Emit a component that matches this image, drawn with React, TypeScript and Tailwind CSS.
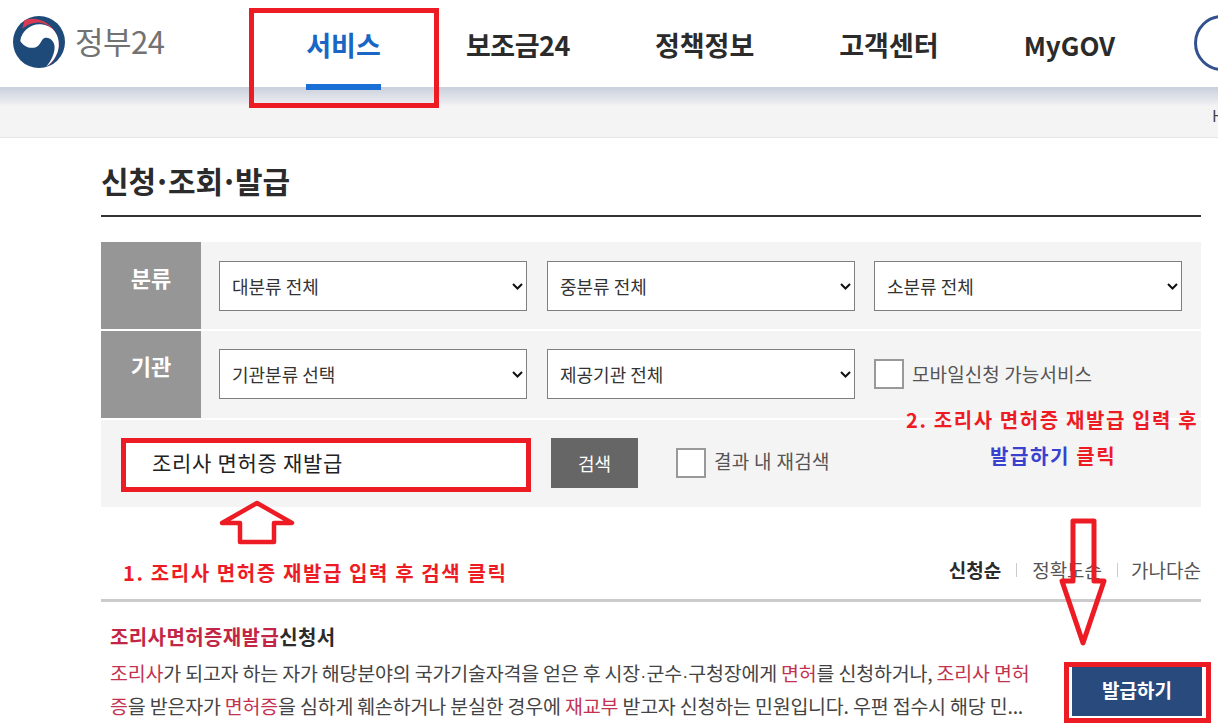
import React from "react";

const kr = "font-['Noto_Sans_CJK_KR','Noto_Sans',sans-serif]";

function Logo() {
  return (
    <svg width="52" height="52" viewBox="0 0 50 50" className="shrink-0">
      <circle cx="25" cy="25" r="25" fill="#1d4a78" />
      <path d="M11 4 A25 25 0 0 1 32 49 C44 40 46 22 36 11 C28 4 18 5 9 12 Z" fill="#db3a55" />
      <path d="M7 24 C8 14 18 7 27 8 C38 9 45 18 44 29 C43.5 37 38 45 32 48.5 C37 43 40 36 40 30 C40 24 35 20 31 21 C27 22 27 28 22 30 C16 32 10 29 7 24Z" fill="#fff" />
    </svg>
  );
}

function Hl({ children }: { children: React.ReactNode }) {
  return <span className="text-[#c2334f]">{children}</span>;
}

function Dot() {
  return <span className="text-[11px] font-bold">·</span>;
}

function Select({ label, className = "" }: { label: string; className?: string }) {
  return (
    <div className={`relative w-[308px] h-[50px] ${className}`}>
      <select className="w-full h-full appearance-none bg-white border border-[#7f7f7f] text-[18px] text-[#333] pl-[12px] rounded-none">
        <option>{label}</option>
      </select>
      <svg className="absolute right-[4px] top-[22px] pointer-events-none" width="11" height="7" viewBox="0 0 11 7" fill="none">
        <path d="M1 1 L5.5 5.5 L10 1" stroke="#111" strokeWidth="2" />
      </svg>
    </div>
  );
}

export default function App() {
  return (
    <div className={`relative w-[1218px] h-[724px] overflow-hidden bg-white ${kr}`}>
      <header className="h-[87px] flex items-start bg-white">
        <div className="flex items-center pl-[13px] pt-[16px] w-[306px]">
          <Logo />
          <span className="ml-[10px] -mt-[4px] text-[31px] leading-none text-[#727272] tracking-[-0.5px]">정부24</span>
        </div>
        <nav className="flex items-start text-[27px] font-bold text-[#2b2b2b] leading-none">
          <div className="relative w-[75px] h-[90px] pt-[31px] border-b-[6px] border-[#1a6fd6] text-[#1a66c4] text-center whitespace-nowrap">서비스</div>
          <div className="ml-[85px] pt-[31px] tracking-[-0.5px] whitespace-nowrap">보조금24</div>
          <div className="ml-[85px] pt-[31px] whitespace-nowrap">정책정보</div>
          <div className="ml-[85px] pt-[31px] whitespace-nowrap">고객센터</div>
          <div className="ml-[85px] pt-[32px] text-[26px] whitespace-nowrap">MyGOV</div>
        </nav>
      </header>
      <div className="h-[51px] bg-[linear-gradient(#c9cfdc,#f5f4f5_20px)] border-b border-[#e6e6e6] flex justify-end text-[#444] text-[16px] pt-[20px] overflow-hidden">
        <span className="w-[6px] overflow-hidden leading-none">H</span>
      </div>
      <main className="pl-[101px] pr-[17px]">
        <h1 className="h-[79px] pt-[20px] border-b-2 border-[#333] text-[30px] leading-[44px] font-bold text-[#2b2b2b]">
          신청<span className="-mx-[3px]">·</span>조회<span className="-mx-[3px]">·</span>발급
        </h1>
        <section className="mt-[25px] flex flex-col gap-[2px] bg-white">
          <div className="h-[87px] flex bg-[#f4f4f4]">
            <div className="w-[100px] bg-[#969696] text-white font-bold text-[22px] text-center pt-[20px] leading-[30px]">분류</div>
            <div className="flex gap-[20px] pl-[18px] pt-[19px]">
              <Select label="대분류 전체" />
              <Select label="중분류 전체" />
              <Select label="소분류 전체" className="-ml-px" />
            </div>
          </div>
          <div className="h-[87px] flex bg-[#f4f4f4]">
            <div className="w-[100px] bg-[#969696] text-white font-bold text-[22px] text-center pt-[19px] leading-[30px]">기관</div>
            <div className="flex gap-[20px] pl-[18px] pt-[18px]">
              <Select label="기관분류 선택" />
              <Select label="제공기관 전체" />
              <div className="flex items-center h-[50px] -ml-px">
                <span className="w-[30px] h-[30px] bg-white border-2 border-[#999]" />
                <span className="ml-[8px] text-[19px] tracking-[0.1px] text-[#555] whitespace-nowrap">모바일신청 가능서비스</span>
              </div>
            </div>
          </div>
          <div className="h-[87px] flex items-start bg-[#f4f4f4] pt-[18px] pl-[20px]">
            <div className="w-[410px] h-[54px] bg-white border-[5px] border-[#ed1c24] pl-[26px] text-[21px] tracking-[0.7px] leading-[38px] text-[#222] whitespace-nowrap">조리사 면허증 재발급</div>
            <button className="ml-[20px] w-[87px] h-[50px] bg-[#666] text-white text-[18px]">검색</button>
            <span className="ml-[38px] mt-[10px] w-[30px] h-[30px] bg-white border-2 border-[#999]" />
            <span className="ml-[8px] mt-[8px] text-[19px] tracking-[0.3px] leading-[30px] text-[#555] whitespace-nowrap">결과 내 재검색</span>
          </div>
        </section>
        <div className="h-[95px] flex justify-end items-end pb-[15px] border-b-[3px] border-[#cbcbcb] text-[19px] leading-[28px] text-[#555]">
          <b className="text-[#2b2b2b]">신청순</b>
          <span className="mx-[15px] mb-[7px] w-px h-[14px] bg-[#ccc]" />
          <span>정확도순</span>
          <span className="ml-[15px] mr-[13px] mb-[7px] w-px h-[14px] bg-[#ccc]" />
          <span>가나다순</span>
        </div>
        <article className="pt-[21px] pl-[9px]">
          <h2 className="text-[20px] font-bold tracking-[0.4px] leading-[28px] text-[#2b2b2b]"><span className="text-[#c22545]">조리사면허증재발급</span>신청서</h2>
          <p className="mt-[7px] text-[19.5px] leading-[29px] text-[#444] tracking-[-0.2px] whitespace-nowrap">
            <Hl>조리사</Hl>가 되고자 하는 자가 해당분야의 국가기술자격을 얻은 후 시장<Dot />군수<Dot />구청장에게 <Hl>면허</Hl>를 신청하거나, <Hl>조리사 면허</Hl><br />
            <Hl>증</Hl>을 받은자가 <Hl>면허증</Hl>을 심하게 훼손하거나 분실한 경우에 <Hl>재교부</Hl> 받고자 신청하는 민원입니다. 우편 접수시 해당 민...
          </p>
        </article>
      </main>

      {/* Annotations over the page */}
      <div className="absolute left-[249px] top-[8px] w-[190px] h-[100px] border-[5px] border-[#ed1c24]" />
      <div className="absolute left-[1194px] top-[15px] w-[56px] h-[56px] rounded-full border-[3px] border-[#33508f] bg-white" />
      <div className="absolute left-[1064px] top-[662px] w-[147px] h-[61px] border-[5px] border-[#ed1c24] bg-white pl-[3px] pr-[4px] py-0">
        <div className="w-full h-[49px] bg-[#284a7c] text-white font-bold text-[19px] leading-[46px] text-center">발급하기</div>
      </div>
      <svg className="absolute left-[218px] top-[500px]" width="78" height="48" viewBox="0 0 78 48" fill="none">
        <path d="M39 3 L74 23 L56 23 L56 42 L22 42 L22 23 L4 23 Z" stroke="#ed1c24" strokeWidth="4.5" strokeLinejoin="round" />
      </svg>
      <svg className="absolute left-[1056px] top-[516px]" width="56" height="132" viewBox="0 0 56 132" fill="none">
        <path d="M17 5 L38 5 L38 65 L48 65 L27 127 L6 65 L17 65 Z" stroke="#ed1c24" strokeWidth="5" strokeLinejoin="round" />
      </svg>
      <div className="absolute left-[123px] top-[560px] text-[20px] leading-[26px] font-bold text-[#ed1c24] tracking-[1.6px] whitespace-nowrap">1. 조리사 면허증 재발급 입력 후 검색 클릭</div>
      <div className="absolute left-[906px] top-[407px] text-[20px] leading-[26px] font-bold text-[#ed1c24] tracking-[1.6px] whitespace-nowrap">2. 조리사 면허증 재발급 입력 후</div>
      <div className="absolute left-[990px] top-[443px] text-[20px] leading-[26px] font-bold text-[#ed1c24] tracking-[1.6px] whitespace-nowrap"><span className="text-[#3a41cf]">발급하기</span> 클릭</div>
    </div>
  );
}
